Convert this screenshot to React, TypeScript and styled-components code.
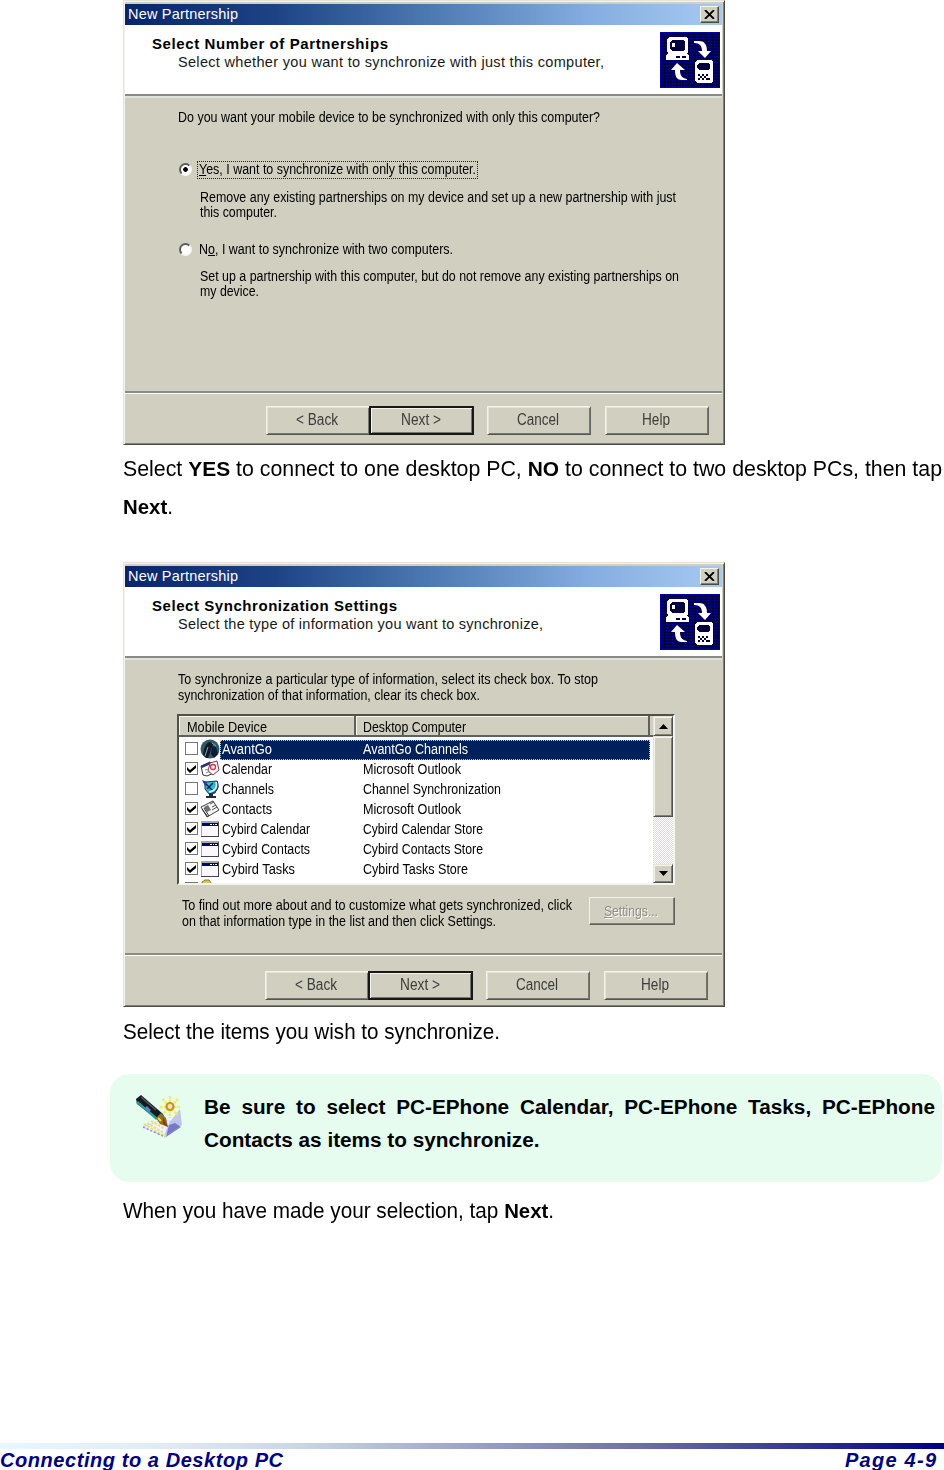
import { ReactNode, useLayoutEffect, useRef, useState } from 'react';
import styled, { createGlobalStyle, css } from 'styled-components';

const face = '#d0cfc0';
const shadow = '#808078';
const dark = '#4a4a48';
const light = '#f4f4ec';
const navy = '#00205c';

const GlobalStyle = createGlobalStyle`
  body {
    margin: 0;
    background: #fff;
    color: #000;
    font-family: 'Liberation Sans', Arial, sans-serif;
  }

  * {
    box-sizing: border-box;
  }
`;

const FitBox = styled.span<{ $width: number }>`
  display: block;
  flex: none;
  width: ${p => p.$width}px;
  white-space: pre;
`;

const FitText = styled.span`
  display: inline-block;
  transform-origin: 0 50%;
`;

// Sets a line of text to a given width: condensed when too long, tracked when too short.
const Fit = ({ width, children }: { width: number; children: ReactNode }) => {
  const ref = useRef<HTMLSpanElement>(null);
  const [style, setStyle] = useState({});

  useLayoutEffect(() => {
    const el = ref.current;
    if (!el) return;
    const natural = el.getBoundingClientRect().width;
    const count = (el.textContent || '').length;
    if (natural > width) {
      setStyle({ transform: `scaleX(${width / natural})` });
    } else {
      setStyle({ letterSpacing: `${(width - natural) / (count - 1)}px` });
    }
  }, [width]);

  return (
    <FitBox $width={width}>
      <FitText ref={ref} style={style}>
        {children}
      </FitText>
    </FitBox>
  );
};

const Page = styled.main`
  width: 944px;
  height: 1470px;
  display: flex;
  flex-direction: column;
  overflow: hidden;
`;

const Paragraph = styled.p<{ $top?: number }>`
  width: 819px;
  margin: ${p => p.$top || 0}px 0 0 123px;
  font-size: 21.4px;
  line-height: 38px;
`;

const Strong = styled.b`
  font-size: 21px;
`;

const Window = styled.section<{ $top?: number }>`
  width: 602px;
  height: 445px;
  margin: ${p => p.$top || 0}px 0 0 123px;
  padding: 1px 0 0;
  display: flex;
  flex-direction: column;
  flex: none;
  background: ${face};
  border: 1px solid;
  border-color: #e4e3d8 ${dark} ${dark} #e4e3d8;
  box-shadow: inset 1px 1px 0 ${light}, inset -1px -1px 0 ${shadow};
`;

const TitleBar = styled.header`
  height: 21px;
  margin: 2px 2px 0 1px;
  padding: 0 3px 0 3px;
  display: flex;
  align-items: center;
  justify-content: space-between;
  flex: none;
  background: linear-gradient(90deg, #08246b 0%, #1d4385 25%, #4b77b0 50%, #85ade0 78%, #a6caf0 100%);
  color: #fff;
  font-size: 14.5px;
  line-height: 18px;

  & > span {
    padding-bottom: 2px;
  }
`;

const CloseButton = styled.button`
  width: 19px;
  height: 17px;
  padding: 0;
  display: grid;
  place-items: center;
  background: ${face};
  border: 1px solid;
  border-color: ${light} ${dark} ${dark} ${light};
  box-shadow: inset -1px -1px 0 ${shadow};
`;

const Banner = styled.div`
  height: 71px;
  margin: 0 2px 0 1px;
  padding: 7px 2px 0 27px;
  display: flex;
  justify-content: space-between;
  flex: none;
  background: #fff;
  border-bottom: 2px solid #8b8b86;
  box-shadow: 0 2px 0 #e2e2dc;
`;

const BannerText = styled.div`
  padding-top: 2px;
`;

const Heading = styled.h2`
  margin: 0;
  font-size: 15px;
  line-height: 20px;
`;

const Subheading = styled.div`
  padding-left: 26px;
  font-size: 14.5px;
  line-height: 16px;
  color: #181818;
`;

const Content = styled.div`
  height: 295px;
  padding-top: 1px;
  flex: none;
  font-size: 14px;
  line-height: 15.5px;
`;

const TextBlock = styled.div<{ $top: number; $left: number }>`
  padding: ${p => p.$top}px 0 0 ${p => p.$left}px;
`;

const Option = styled.div<{ $top: number }>`
  height: 18px;
  margin: ${p => p.$top}px 0 0 54px;
  display: flex;
  align-items: center;
`;

const Radio = styled.span<{ $checked?: boolean }>`
  width: 13px;
  height: 13px;
  margin: 0 5px 1px 1px;
  border-radius: 50%;
  border: 2px solid;
  border-color: #5c5c58 #f8f8f0 #f8f8f0 #5c5c58;
  background: ${p => (p.$checked ? 'radial-gradient(circle, #000 0 2px, #fff 2.6px)' : '#fff')};
`;

const OptionLabel = styled.span<{ $focused?: boolean }>`
  height: 18px;
  padding: 0 1px;
  border: 1px ${p => (p.$focused ? 'dotted #222' : 'solid transparent')};
`;

const Footer = styled.footer<{ $top: number; $left: number }>`
  flex: 1;
  margin: 0 2px 0 1px;
  padding: ${p => p.$top}px 0 0 ${p => p.$left}px;
  display: flex;
  align-items: flex-start;
  border-top: 2px solid #8b8b86;
  box-shadow: inset 0 1px 0 #fff;
`;

const PushButton = styled.button<{ $primary?: boolean; $gap?: number }>`
  width: ${p => (p.$primary ? 105 : 104)}px;
  height: 29px;
  margin: 0 0 0 ${p => p.$gap || 0}px;
  padding: 0 2px 2px 0;
  display: flex;
  align-items: center;
  justify-content: center;
  flex: none;
  background: ${face};
  border: 1px solid;
  border-color: ${light} #666 #555 ${light};
  box-shadow: inset 1px 1px 0 #e4e3d8, inset -1px -1px 0 #777770;
  color: #3c3c3a;
  font: 16px/20px 'Liberation Sans', Arial, sans-serif;

  ${p =>
    p.$primary &&
    css`
      border: 2px solid #181818;
      box-shadow: inset 1px 1px 0 ${light}, inset -1px -1px 0 #777770;
    `}
`;

const ListBox = styled.div`
  width: 498px;
  height: 171px;
  margin: 11px 0 0 53px;
  display: flex;
  background: #fff;
  border: 2px solid;
  border-color: #50504e ${light} ${light} #50504e;
`;

const ListMain = styled.div`
  width: 474px;
  height: 167px;
  overflow: hidden;
`;

const ListHeader = styled.div`
  height: 21px;
  display: grid;
  grid-template-columns: 177px 294px 1fr;
  background: ${face};
  border-bottom: 2px solid #60605c;
`;

const HeaderCell = styled.div`
  padding: 4px 0 0 8px;
  border-right: 2px solid #60605c;
  box-shadow: inset 1px 1px 0 ${light};
  line-height: 15px;

  & + & {
    padding-left: 7px;
  }
`;

const ListBody = styled.div`
  padding-top: 3px;
`;

const ListRow = styled.div`
  height: 20px;
  padding-left: 6px;
  display: flex;
  align-items: center;
`;

const CheckBox = styled.span`
  width: 13px;
  height: 13px;
  margin: -3px 2px 0 0;
  flex: none;
  display: grid;
  place-items: center;
  background: #fff;
  border: 1px solid #77776f;
`;

const RowIcon = styled.svg`
  width: 20px;
  height: 20px;
  margin-top: -2px;
  flex: none;
`;

const RowLabel = styled.div<{ $selected?: boolean }>`
  width: 430px;
  height: 20px;
  padding-left: 1px;
  display: grid;
  grid-template-columns: 141px 1fr;
  align-items: center;
  border: 1px dotted ${p => (p.$selected ? '#d8c890' : 'transparent')};
  background: ${p => (p.$selected ? navy : 'transparent')};
  color: ${p => (p.$selected ? '#fff' : '#000')};
`;

const ScrollBar = styled.div`
  width: 20px;
  display: flex;
  flex-direction: column;
  background: repeating-conic-gradient(#fff 0 25%, #dcdbd0 0 50%) 0 0 / 2px 2px;
`;

const ScrollPart = styled.div<{ $height: number }>`
  height: ${p => p.$height}px;
  display: grid;
  place-items: center;
  background: ${face};
  border: 1px solid;
  border-color: #e4e3d8 #50504e #50504e #e4e3d8;
  box-shadow: inset 1px 1px 0 ${light}, inset -1px -1px 0 ${shadow};
`;

const ScrollTrack = styled.div`
  flex: 1;
`;

const SettingsRow = styled.div`
  margin: 12px 0 0 58px;
  display: flex;
`;

const SettingsHint = styled.div`
  width: 407px;
  padding-top: 1px;
`;

const SettingsButton = styled.button`
  width: 86px;
  height: 28px;
  padding: 0 0 0 14px;
  background: ${face};
  border: 1px solid;
  border-color: ${light} #60605c #60605c ${light};
  box-shadow: inset -1px -1px 0 ${shadow};
  color: #8f8e84;
  text-align: left;
  text-shadow: 1px 1px 0 #fff;
  font: 14px/16px 'Liberation Sans', Arial, sans-serif;
`;

const Note = styled.aside`
  width: 832px;
  height: 108px;
  margin: 23px 0 0 110px;
  padding: 16px 7px 0 26px;
  display: flex;
  flex: none;
  background: #e6fcee;
  border-radius: 20px;
`;

const NoteIcon = styled.svg`
  width: 48px;
  height: 46px;
  margin: 4px 20px 0 0;
  flex: none;
`;

const NoteText = styled.div`
  width: 731px;
  font-size: 20.75px;
  font-weight: bold;
  line-height: 33px;
  text-align: justify;
`;

const PageFooter = styled.footer`
  margin-top: auto;
  height: 27px;
`;

const FooterRule = styled.div`
  height: 6px;
  background: linear-gradient(90deg, #e8f8ff 0%, #dfeaf5 18%, #cbd5e6 32%, #6c6fa4 68%, #000080 100%);
`;

const FooterText = styled.div`
  padding-right: 8px;
  display: flex;
  justify-content: space-between;
  color: #000080;
  font-size: 20px;
  font-style: italic;
  font-weight: bold;
  line-height: 22px;
`;

const SyncLogo = () => (
  <svg width="60" height="56" viewBox="0 0 60 56" shapeRendering="crispEdges">
    <defs>
      <pattern id="dither" width="3" height="3" patternUnits="userSpaceOnUse">
        <rect width="3" height="3" fill="#000058" />
        <rect width="1" height="1" fill="#0000c0" />
        <rect x="1" y="2" width="1" height="1" fill="#000018" />
      </pattern>
    </defs>
    <rect width="60" height="56" fill="url(#dither)" />
    <rect x=".5" y=".5" width="59" height="55" fill="none" stroke="#0000a8" />
    <path d="M9 5h17l2 2v13l-2 2H9l-2-2V7z" fill="#fff" />
    <path d="M12 8h11l2 2v7l-2 2H12l-2-2v-7z" fill="#000040" />
    <path d="M12 11h3v4h-3z" fill="#fff" />
    <path d="M8 21h19l2 3v4H6v-4z" fill="#fff" />
    <path d="M16 24h4v2h-4zM22 24h4v2h-4z" fill="#000040" />
    <path
      d="M34 9h5c5 0 8 3 8 10h4l-6 7-7-7h4c0-5-2-8-8-8z"
      fill="#fff"
      shapeRendering="auto"
    />
    <path
      d="M27 48h-5c-6 0-7-5-7-10h-4l6-7 8 7h-5c0 4 1 8 7 9z"
      fill="#fff"
      shapeRendering="auto"
    />
    <path d="M37 28h14l2 2v19l-2 2H37l-2-2V30z" fill="#fff" />
    <path d="M39 31h9l2 2v3l-2 2h-9l-2-2v-3z" fill="#000040" />
    <path
      d="M38 42h2v2h-2zM42 42h2v2h-2zM46 42h2v2h-2zM40 44h2v2h-2zM44 44h2v2h-2zM48 46h2v2h-2zM38 46h2v2h-2zM42 46h2v2h-2zM46 46h2v2h-2z"
      fill="#000040"
    />
  </svg>
);

const NotePen = () => (
  <NoteIcon viewBox="0 0 48 46">
    <path d="M7 33l19-7 19 3-15 14z" fill="#f0f2fc" stroke="#c4c8ee" strokeDasharray="2 1" />
    <path d="M28 42l5-13 11-14 2 16z" fill="#b4b8ee" opacity=".8" />
    <path d="M30 43l3-12 6-2 6 4z" fill="#6468b8" opacity=".8" />
    <path d="M8 30l22 13M11 29l17 10M15 27l14 8" stroke="#e8e070" strokeWidth="2" strokeDasharray="2.500 1.500" />
    <path d="M7 33l22 10" stroke="#9096dc" strokeWidth="1.500" strokeDasharray="2 2" />
    <path d="M34 2v22M24 13h21M26.500 5l15 16M42 5L27 20" stroke="#f5ee50" strokeWidth="2.500" strokeDasharray="2.500 1" />
    <circle cx="34" cy="12.500" r="3.500" fill="#ffe890" stroke="#c89040" strokeWidth="2.200" />
    <path d="M0 5l5-4 22 19 3 8-9-3L1 10z" fill="#111c22" />
    <path d="M1 8l20 17" stroke="#2f9a90" strokeWidth="2.500" />
    <path d="M5 3l15 13" stroke="#5a5650" strokeWidth="1.500" />
    <path d="M10 13l4 4" stroke="#6a78e0" strokeWidth="2.500" />
    <path d="M20 24l5-5 5 5 2 9-8-3z" fill="#8a7420" />
    <path d="M22 24l3 3" stroke="#f0e020" strokeWidth="2" />
    <path d="M27 23l5 10-5-3z" fill="#a03028" />
  </NoteIcon>
);

const iconArt: Record<string, ReactNode> = {
  avantgo: (
    <>
      <circle cx="10" cy="10" r="9.500" fill="#315a67" />
      <path d="M3 16C4 8 6 4 10 3l3 2-5 14H6z" fill="#0b1a2c" />
      <path d="M12 7l4 1 2 7-4 4-3-4z" fill="#0c1c38" />
      <path d="M8 8l-3 9M12 4l4 3" stroke="#8ba4ac" />
    </>
  ),
  calendar: (
    <>
      <path d="M1 7l9-4 6 10-9 4-4-1z" fill="#fff" stroke="#303048" />
      <path d="M1 7l9-4 1 2-9 4z" fill="#28307c" />
      <path d="M10 4l7-2 2 9-6 5-5-4z" fill="#fdf2f4" stroke="#704050" />
      <circle cx="13" cy="8" r="2.500" fill="none" stroke="#d03848" strokeWidth="1.300" />
      <path d="M5 11l4-1M6 14l4-2" stroke="#888" />
    </>
  ),
  channels: (
    <>
      <path d="M9 14h4v3h3v2H6v-2h3z" fill="#282838" />
      <path d="M5 3l12-1 1 6-3 6-6 1-4-5z" fill="#30b8cc" stroke="#183858" />
      <path d="M4 3l9 9M7 10l6-6" stroke="#102060" strokeWidth="1.500" fill="none" />
      <path d="M17 2c3 6 0 12-8 13" stroke="#203040" fill="none" />
      <path d="M16 3c2 5-1 9-7 10" stroke="#d8f6fa" strokeWidth="1.500" fill="none" />
      <path d="M2 1l5 2-2 4z" fill="#1840b0" />
    </>
  ),
  contacts: (
    <>
      <path d="M1 8l12-6 6 9-12 7z" fill="#f6f6f4" stroke="#404044" />
      <path d="M4 8l4-2 3 5-4 2z" fill="#707078" />
      <path d="M10 5l4-2M12 8l4-2M12 11l5-3" stroke="#505058" />
      <path d="M2 10l6 8M4 9l5 8" stroke="#303034" />
    </>
  ),
  window: (
    <g shapeRendering="crispEdges">
      <path d="M1 2h18v16H1z" fill="#fbf7ff" />
      <path d="M1 2h18v2H2v14H1z" fill="#a8a4b0" />
      <path d="M2 4h16v3H2z" fill="#000078" />
      <path d="M10 5h2v1h-2zM13 5h1v1h-1zM15 5h2v1h-2z" fill="#fff" />
      <path d="M18 3h1v15h-1zM1 17h18v1H1z" fill="#45434c" />
    </g>
  ),
  folder: <path d="M2 8V3l3-2h4l3 4h6v3z" fill="#d8cc50" stroke="#807828" />,
};

const Check = () => (
  <svg width="9" height="9" viewBox="0 0 9 9">
    <path d="M0 3l3 3 6-5v3L3 9 0 6z" fill="#000" />
  </svg>
);

interface Item {
  name: string;
  store: string;
  icon: string;
  nameWidth: number;
  storeWidth: number;
  checked?: boolean;
  selected?: boolean;
}

const items: Item[] = [
  { name: 'AvantGo', store: 'AvantGo Channels', icon: 'avantgo', nameWidth: 50, storeWidth: 105, selected: true },
  { name: 'Calendar', store: 'Microsoft Outlook', icon: 'calendar', nameWidth: 50, storeWidth: 98, checked: true },
  { name: 'Channels', store: 'Channel Synchronization', icon: 'channels', nameWidth: 52, storeWidth: 138 },
  { name: 'Contacts', store: 'Microsoft Outlook', icon: 'contacts', nameWidth: 50, storeWidth: 98, checked: true },
  { name: 'Cybird Calendar', store: 'Cybird Calendar Store', icon: 'window', nameWidth: 88, storeWidth: 120, checked: true },
  { name: 'Cybird Contacts', store: 'Cybird Contacts Store', icon: 'window', nameWidth: 88, storeWidth: 120, checked: true },
  { name: 'Cybird Tasks', store: 'Cybird Tasks Store', icon: 'window', nameWidth: 73, storeWidth: 105, checked: true },
];

interface WizardProps {
  top?: number;
  heading: string;
  headingWidth: number;
  subheading: string;
  subheadingWidth: number;
  footerTop: number;
  footerLeft: number;
  children: ReactNode;
}

const Wizard = (props: WizardProps) => (
  <Window $top={props.top}>
    <TitleBar>
      <Fit width={110}>New Partnership</Fit>
      <CloseButton aria-label="Close">
        <svg width="11" height="9" viewBox="0 0 11 9">
          <path d="M1 0l9 9M10 0L1 9" stroke="#000" strokeWidth="1.800" />
        </svg>
      </CloseButton>
    </TitleBar>
    <Banner>
      <BannerText>
        <Heading>
          <Fit width={props.headingWidth}>{props.heading}</Fit>
        </Heading>
        <Subheading>
          <Fit width={props.subheadingWidth}>{props.subheading}</Fit>
        </Subheading>
      </BannerText>
      <SyncLogo />
    </Banner>
    <Content>{props.children}</Content>
    <Footer $top={props.footerTop} $left={props.footerLeft}>
      <PushButton>
        <Fit width={42}>&lt; Back</Fit>
      </PushButton>
      <PushButton $primary $gap={-1}>
        <Fit width={40}>Next &gt;</Fit>
      </PushButton>
      <PushButton $gap={13}>
        <Fit width={42}>Cancel</Fit>
      </PushButton>
      <PushButton $gap={14}>
        <Fit width={28}>Help</Fit>
      </PushButton>
    </Footer>
  </Window>
);

export default function App() {
  return (
    <Page>
      <GlobalStyle />
      <Wizard
        heading="Select Number of Partnerships"
        headingWidth={236}
        subheading="Select whether you want to synchronize with just this computer,"
        subheadingWidth={426}
        footerTop={13}
        footerLeft={141}
      >
        <TextBlock $top={13} $left={54}>
          <Fit width={422}>Do you want your mobile device to be synchronized with only this computer?</Fit>
        </TextBlock>
        <Option $top={35}>
          <Radio $checked />
          <OptionLabel $focused>
            <Fit width={277}>
              <u>Y</u>es, I want to synchronize with only this computer.
            </Fit>
          </OptionLabel>
        </Option>
        <TextBlock $top={11} $left={76}>
          <Fit width={476}>Remove any existing partnerships on my device and set up a new partnership with just</Fit>
          <Fit width={77}>this computer.</Fit>
        </TextBlock>
        <Option $top={20}>
          <Radio />
          <OptionLabel>
            <Fit width={254}>
              N<u>o</u>, I want to synchronize with two computers.
            </Fit>
          </OptionLabel>
        </Option>
        <TextBlock $top={10} $left={76}>
          <Fit width={479}>Set up a partnership with this computer, but do not remove any existing partnerships on</Fit>
          <Fit width={59}>my device.</Fit>
        </TextBlock>
      </Wizard>
      <Paragraph $top={5}>
        <Fit width={819}>
          Select <Strong>YES</Strong> to connect to one desktop PC, <Strong>NO</Strong> to connect to two desktop PCs,
          then tap
        </Fit>
        <Fit width={50}>
          <Strong>Next</Strong>.
        </Fit>
      </Paragraph>
      <Wizard
        top={36}
        heading="Select Synchronization Settings"
        headingWidth={245}
        subheading="Select the type of information you want to synchronize,"
        subheadingWidth={365}
        footerTop={16}
        footerLeft={140}
      >
        <TextBlock $top={13} $left={54}>
          <Fit width={420}>To synchronize a particular type of information, select its check box. To stop</Fit>
          <Fit width={302}>synchronization of that information, clear its check box.</Fit>
        </TextBlock>
        <ListBox>
          <ListMain>
            <ListHeader>
              <HeaderCell>
                <Fit width={80}>Mobile Device</Fit>
              </HeaderCell>
              <HeaderCell>
                <Fit width={103}>Desktop Computer</Fit>
              </HeaderCell>
            </ListHeader>
            <ListBody>
              {items.map(item => (
                <ListRow key={item.name}>
                  <CheckBox>{item.checked && <Check />}</CheckBox>
                  <RowIcon viewBox="0 0 20 20">{iconArt[item.icon]}</RowIcon>
                  <RowLabel $selected={item.selected}>
                    <Fit width={item.nameWidth}>{item.name}</Fit>
                    <Fit width={item.storeWidth}>{item.store}</Fit>
                  </RowLabel>
                </ListRow>
              ))}
              <ListRow>
                <CheckBox />
                <RowIcon viewBox="0 0 20 20">{iconArt.folder}</RowIcon>
              </ListRow>
            </ListBody>
          </ListMain>
          <ScrollBar>
            <ScrollPart $height={20}>
              <svg width="9" height="5" viewBox="0 0 9 5">
                <path d="M0 5l4.500-5L9 5z" />
              </svg>
            </ScrollPart>
            <ScrollPart $height={81} />
            <ScrollTrack />
            <ScrollPart $height={19}>
              <svg width="9" height="5" viewBox="0 0 9 5">
                <path d="M0 0l4.500 5L9 0z" />
              </svg>
            </ScrollPart>
          </ScrollBar>
        </ListBox>
        <SettingsRow>
          <SettingsHint>
            <Fit width={390}>To find out more about and to customize what gets synchronized, click</Fit>
            <Fit width={314}>on that information type in the list and then click Settings.</Fit>
          </SettingsHint>
          <SettingsButton disabled>
            <Fit width={54}>
              <u>S</u>ettings...
            </Fit>
          </SettingsButton>
        </SettingsRow>
      </Wizard>
      <Paragraph $top={6}>
        <Fit width={377}>Select the items you wish to synchronize.</Fit>
      </Paragraph>
      <Note>
        <NotePen />
        <NoteText>
          Be sure to select PC-EPhone Calendar, PC-EPhone Tasks, PC-EPhone Contacts as items to synchronize.
        </NoteText>
      </Note>
      <Paragraph $top={10}>
        <Fit width={431}>
          When you have made your selection, tap <Strong>Next</Strong>.
        </Fit>
      </Paragraph>
      <PageFooter>
        <FooterRule />
        <FooterText>
          <Fit width={283}>Connecting to a Desktop PC</Fit>
          <Fit width={91}>Page 4-9</Fit>
        </FooterText>
      </PageFooter>
    </Page>
  );
}
